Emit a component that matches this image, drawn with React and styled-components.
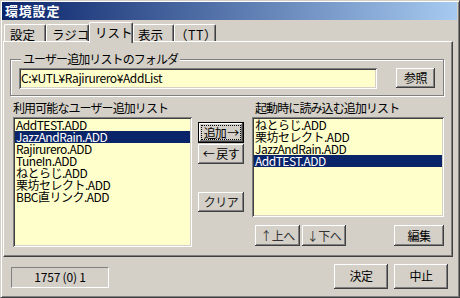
import React from 'react';
import styled, { createGlobalStyle } from 'styled-components';

const FONT = `"Noto Sans CJK JP", "Liberation Sans", sans-serif`;

const Global = createGlobalStyle`
  html, body { margin: 0; padding: 0; background: #d4d0c8; }
  body { width: 460px; height: 298px; overflow: hidden; }
  * { box-sizing: border-box; }
`;

const Window = styled.div`
  width: 460px;
  height: 298px;
  background: #d4d0c8;
  border: 1px solid;
  border-color: #d4d0c8 #404040 #404040 #d4d0c8;
  box-shadow: inset 1px 1px #fff, inset -1px -1px #808080;
  padding: 1px 2px 2px 1px;
  display: flex;
  flex-direction: column;
  font: 12px/12px ${FONT};
  color: #000;
`;

const TitleBar = styled.div`
  height: 18px;
  flex: none;
  display: flex;
  align-items: center;
  padding-left: 3px;
  background: linear-gradient(to right, #0a246a, #a6caf0);
  color: #fff;
  font-weight: bold;
  font-size: 13px;
  letter-spacing: 0.8px;
`;

const TabStrip = styled.div`
  height: 21px;
  flex: none;
  display: flex;
  align-items: flex-end;
  padding-left: 2px;
  position: relative;
  z-index: 1;
`;

const Tab = styled.div`
  width: ${(p) => p.$w}px;
  height: ${(p) => (p.$active ? 21 : 17)}px;
  margin-bottom: ${(p) => (p.$active ? -2 : 0)}px;
  background: #d4d0c8;
  border-top: 1px solid #fff;
  border-left: 1px solid #fff;
  border-right: 1px solid #404040;
  box-shadow: inset -1px 0 #808080;
  border-radius: 2px 2px 0 0;
  padding: 3px 0 0 ${(p) => p.$pl}px;
  line-height: 13px;
  font-size: 12.5px;
  letter-spacing: ${(p) => p.$ls || 0}px;
  white-space: nowrap;
`;

const Panel = styled.div`
  width: 450px;
  height: 216px;
  flex: none;
  margin-left: 1px;
  border: 1px solid;
  border-color: #fff #404040 #404040 #fff;
  box-shadow: inset -1px -1px #808080;
  padding: 17px 0 0 6px;
  display: flex;
  flex-direction: column;
`;

const Group = styled.div`
  position: relative;
  width: 434px;
  height: 37px;
  flex: none;
  border: 1px solid #808080;
  box-shadow: inset 1px 1px #fff, 1px 1px #fff;
  display: flex;
  align-items: flex-start;
  padding: 8px 8px 0 8px;
  gap: 19px;
`;

const Legend = styled.div`
  position: absolute;
  left: 10px;
  top: -8px;
  padding: 0 2px;
  background: #d4d0c8;
  line-height: 14px;
  font-size: 12px;
  letter-spacing: -0.9px;
`;

const TextField = styled.div`
  width: 358px;
  height: 21px;
  flex: none;
  background: #ffffcc;
  box-shadow: inset 1px 1px #808080, inset -1px -1px #fff, inset 2px 2px #404040, inset -2px -2px #d4d0c8;
  padding: 2px 0 0 2px;
  line-height: 16px;
  font-size: 12px;
  letter-spacing: -0.4px;
  white-space: nowrap;
`;

const Button = styled.div`
  width: ${(p) => p.$w}px;
  height: ${(p) => p.$h || 21}px;
  flex: none;
  margin-top: ${(p) => p.$mt || 0}px;
  margin-left: ${(p) => (p.$push ? 'auto' : '0')};
  background: #d4d0c8;
  display: flex;
  align-items: center;
  justify-content: center;
  white-space: nowrap;
  font-size: 12px;
  line-height: 12px;
  letter-spacing: ${(p) => p.$ls ?? -0.5}px;
  color: ${(p) => p.$color || '#000'};
  box-shadow: ${(p) =>
    p.$default
      ? 'inset 0 0 0 1px #000, inset -2px -2px #404040, inset 2px 2px #fff, inset -3px -3px #808080'
      : 'inset -1px -1px #404040, inset 1px 1px #fff, inset -2px -2px #808080'};
`;

const Focus = styled.span`
  width: 40px;
  height: 15px;
  border: 1px dotted #000;
  display: flex;
  align-items: center;
  justify-content: center;
  line-height: 12px;
  letter-spacing: -1px;
`;

const ListsRow = styled.div`
  display: flex;
  margin: 5px 0 0 3px;
`;

const Column = styled.div`
  width: ${(p) => p.$w}px;
  margin-left: ${(p) => p.$ml || 0}px;
  padding-top: ${(p) => p.$pt || 0}px;
  flex: none;
  display: flex;
  flex-direction: column;
`;

const Label = styled.div`
  height: 14px;
  line-height: 14px;
  margin-bottom: 2px;
  padding-left: ${(p) => p.$pl || 0}px;
  letter-spacing: -0.9px;
  white-space: nowrap;
`;

const List = styled.div`
  height: ${(p) => p.$h}px;
  background: #ffffcc;
  box-shadow: inset 1px 1px #808080, inset -1px -1px #fff, inset 2px 2px #404040, inset -2px -2px #d4d0c8;
  padding: 2px;
`;

const Row = styled.div`
  height: 12px;
  line-height: 12px;
  padding-left: 1px;
  white-space: nowrap;
  letter-spacing: -0.5px;
  background: ${(p) => (p.$sel ? '#0a246a' : 'transparent')};
  color: ${(p) => (p.$sel ? '#fff' : '#000')};
`;

const ButtonRow = styled.div`
  display: flex;
  gap: 2px;
  margin-top: 8px;
  padding-left: 3px;
`;

const Footer = styled.div`
  flex: 1;
  display: flex;
  align-items: center;
  padding: 0 9px;
  gap: 6px;
`;

const Status = styled.div`
  width: 98px;
  height: 21px;
  border: 1px solid;
  border-color: #808080 #fff #fff #808080;
  display: flex;
  align-items: center;
  justify-content: center;
  margin-right: auto;
  margin-top: 2px;
  letter-spacing: -0.2px;
`;

const available = [
  'AddTEST.ADD',
  'JazzAndRain.ADD',
  'Rajirurero.ADD',
  'TuneIn.ADD',
  'ねとらじ.ADD',
  '栗坊セレクト.ADD',
  'BBC直リンク.ADD',
];

const startup = ['ねとらじ.ADD', '栗坊セレクト.ADD', 'JazzAndRain.ADD', 'AddTEST.ADD'];

const tabs = [
  { label: '設定', w: 42, pl: 5 },
  { label: 'ラジコ', w: 43, pl: 5 },
  { label: 'リスト', w: 44, pl: 5, active: true },
  { label: '表示', w: 41, pl: 4 },
  { label: '（TT）', w: 42, pl: 0, ls: 0.5 },
];

export default function App() {
  return (
    <>
      <Global />
      <Window>
        <TitleBar>環境設定</TitleBar>
        <TabStrip>
          {tabs.map((t) => (
            <Tab key={t.label} $w={t.w} $pl={t.pl} $ls={t.ls} $active={t.active}>
              {t.label}
            </Tab>
          ))}
        </TabStrip>
        <Panel>
          <Group>
            <Legend>ユーザー追加リストのフォルダ</Legend>
            <TextField>C:¥UTL¥Rajirurero¥AddList</TextField>
            <Button $w={39} $h={20}>参照</Button>
          </Group>
          <ListsRow>
            <Column $w={179}>
              <Label>利用可能なユーザー追加リスト</Label>
              <List $h={130}>
                {available.map((n, i) => (
                  <Row key={n} $sel={i === 1}>{n}</Row>
                ))}
              </List>
            </Column>
            <Column $w={46} $ml={6} $pt={21}>
              <Button $w={46} $default><Focus>追加 →</Focus></Button>
              <Button $w={46} $h={20} $mt={1}>← 戻す</Button>
              <Button $w={46} $h={20} $mt={28} $color="#222">クリア</Button>
            </Column>
            <Column $w={192} $ml={8}>
              <Label $pl={3}>起動時に読み込む追加リスト</Label>
              <List $h={100}>
                {startup.map((n, i) => (
                  <Row key={n} $sel={i === 3}>{n}</Row>
                ))}
              </List>
              <ButtonRow>
                <Button $w={45} $color="#333">↑上へ</Button>
                <Button $w={44} $color="#333">↓下へ</Button>
                <Button $w={50} $push>編集</Button>
              </ButtonRow>
            </Column>
          </ListsRow>
        </Panel>
        <Footer>
          <Status>1757 (0) 1</Status>
          <Button $w={54} $h={25}>決定</Button>
          <Button $w={54} $h={25}>中止</Button>
        </Footer>
      </Window>
    </>
  );
}
